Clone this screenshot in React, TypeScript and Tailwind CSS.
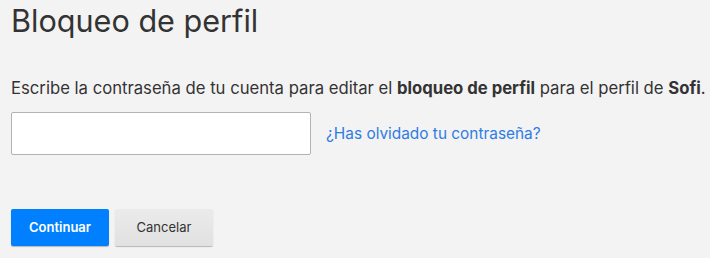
import React from "react";

export default function App() {
  return (
    <div className="w-[710px] h-[258px] bg-[#f3f3f3] text-[#333] overflow-hidden" style={{ fontFamily: "Inter, 'Noto Sans', sans-serif" }}>
      <div className="pl-[11px] pt-[1px]">
        <h1 className="text-[30.6px] leading-[40px] font-normal text-[#333]">Bloqueo de perfil</h1>
        <p className="mt-[35px] text-[16.68px] leading-[24px] text-[#333] whitespace-nowrap">
          Escribe la contraseña de tu cuenta para editar el <b className="font-bold">bloqueo de perfil</b> para el perfil de <b className="font-bold">Sofi</b>.
        </p>
        <div className="mt-[12px] flex items-center gap-[15px]">
          <input type="password" className="w-[300px] h-[43px] bg-white border border-[#b3b3b3] rounded-[2px] outline-none" />
          <a className="text-[15.4px] text-[#2e7ce3]">¿Has olvidado tu contraseña?</a>
        </div>
        <div className="mt-[54px] flex gap-[6px]">
          <button className="w-[98px] h-[37px] bg-[#0080ff] text-white text-[13px] font-semibold rounded-[2px] shadow-[0_1px_1px_rgba(0,0,0,0.25)]">Continuar</button>
          <button className="w-[98px] h-[37px] bg-gradient-to-b from-[#ebebeb] to-[#e1e1e1] text-[#333] text-[13px] rounded-[2px] shadow-[0_1px_1px_rgba(0,0,0,0.25)]">Cancelar</button>
        </div>
      </div>
    </div>
  );
}
